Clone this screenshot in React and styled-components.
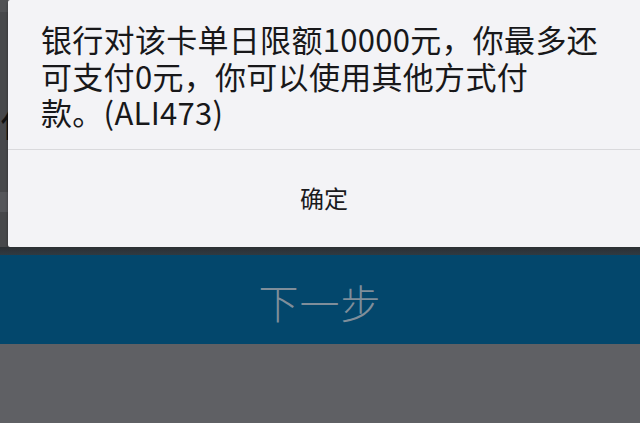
import React from 'react';
import styled, { createGlobalStyle } from 'styled-components';

const GlobalStyle = createGlobalStyle`
  html, body {
    margin: 0;
    padding: 0;
    background: #5e5f63;
  }
  body {
    font-family: "Noto Sans CJK SC", "Noto Sans", sans-serif;
    width: 640px;
    height: 423px;
    overflow: hidden;
  }
`;

const Screen = styled.div`
  width: 640px;
  height: 423px;
  display: flex;
  flex-direction: column;
  background: #5e5f63;
`;

const TopArea = styled.div`
  display: flex;
  height: 247px;
  background: #46474a;
`;

const Gutter = styled.div`
  width: 8px;
  overflow: hidden;
  display: flex;
  flex-direction: column;
  background: #47484b;
`;

const GutterBand = styled.div`
  height: ${p => p.h}px;
  background: ${p => p.bg || 'transparent'};
  display: flex;
  justify-content: flex-end;
  align-items: center;
  overflow: hidden;
`;

const PeekGlyph = styled.span`
  font-size: 36px;
  line-height: 36px;
  color: #111;
  margin-right: -28px;
  white-space: nowrap;
`;

const Dialog = styled.div`
  flex: 1;
  display: flex;
  flex-direction: column;
  background: #f3f3f6;
  border-radius: 2px 0 0 2px;
  box-shadow: 0 2px 3px rgba(0, 0, 0, 0.4);
`;

const Message = styled.p`
  margin: 0;
  height: 149px;
  box-sizing: border-box;
  padding: 21px 24px 0 33px;
  font-size: 31px;
  line-height: 36.5px;
  color: #18181a;
  letter-spacing: 0.3px;
`;

const Divider = styled.div`
  height: 1px;
  background: #d9d9dc;
`;

const ConfirmButton = styled.button`
  flex: 1;
  border: none;
  background: transparent;
  font-family: inherit;
  font-size: 24px;
  color: #1a1a1c;
  display: flex;
  align-items: center;
  justify-content: center;
  padding: 0 0 2px;
`;

const ShadowBand = styled.div`
  height: 8px;
  background: linear-gradient(#2c2f33, #2f3a42);
`;

const NextBar = styled.div`
  height: 89px;
  background: #03476c;
  display: flex;
  align-items: center;
  justify-content: center;
  font-size: 40px;
  font-weight: 300;
  color: #7f8e9a;
  padding-top: 4px;
  box-sizing: border-box;
  letter-spacing: 1px;
`;

const Footer = styled.div`
  flex: 1;
  background: #5f6064;
`;

export default function App() {
  return (
    <>
      <GlobalStyle />
      <Screen>
        <TopArea>
          <Gutter>
            <GutterBand h={12} bg="#515255" />
            <GutterBand h={88} />
            <GutterBand h={42}>
              <PeekGlyph>付</PeekGlyph>
            </GutterBand>
            <GutterBand h={50} />
            <GutterBand h={20} bg="#55565a" />
            <GutterBand h={35} />
          </Gutter>
          <Dialog>
            <Message>
              银行对该卡单日限额10000元，你最多还可支付0元，你可以使用其他方式付
              <br />
              款。(ALI473)
            </Message>
            <Divider />
            <ConfirmButton>确定</ConfirmButton>
          </Dialog>
        </TopArea>
        <ShadowBand />
        <NextBar>下一步</NextBar>
        <Footer />
      </Screen>
    </>
  );
}
